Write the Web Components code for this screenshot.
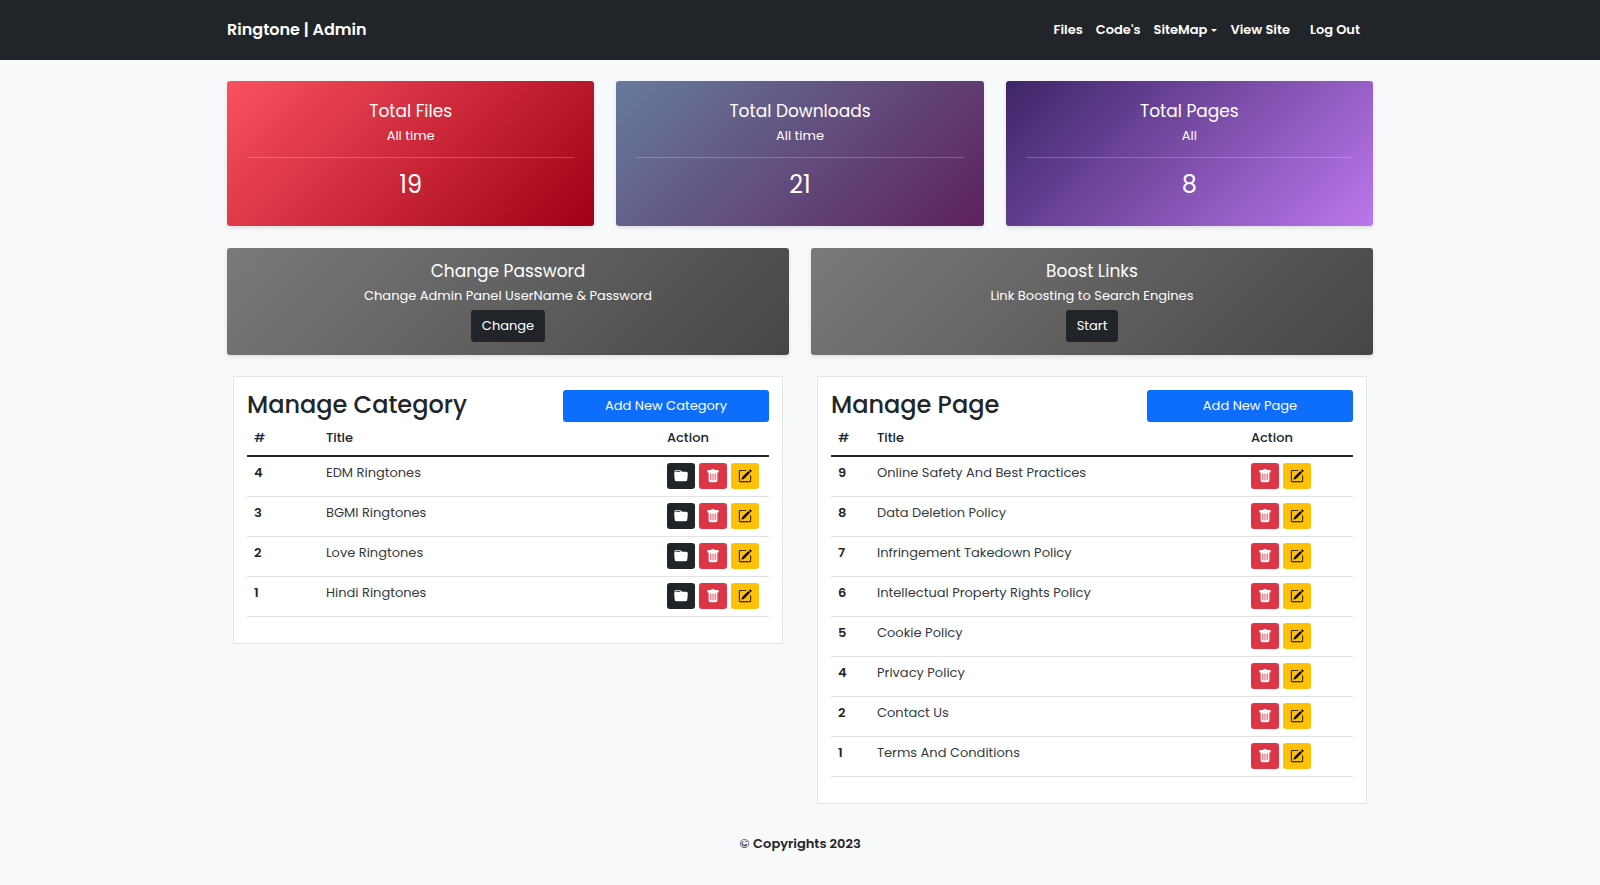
<!DOCTYPE html>
<html lang="en">
<head>
<meta charset="utf-8">
<meta name="viewport" content="width=device-width, initial-scale=1">
<title>Ringtone | Admin</title>
<style>
  body { margin: 0; background: #f8f9fb; color: #212529; font: 400 13px/20px Poppins, Inter, "Open Sans", sans-serif; }
  main { max-width: 1146px; margin: 21px auto 0; padding: 0 12px; }
  .row { display: grid; gap: 22px; margin-bottom: 21px; align-items: start; }
  .row.stats { grid-template-columns: repeat(3, 1fr); margin-bottom: 22px; }
  .row.halves { grid-template-columns: repeat(2, 1fr); }
  @media (max-width: 800px) { .row.stats, .row.halves { grid-template-columns: 1fr; } }
</style>
</head>
<body>
<admin-navbar></admin-navbar>
<main>
  <section class="row stats">
    <stat-card style="--from:#f9515f;--to:#9f0016">Total Files<span slot="sub">All time</span><span slot="value">19</span></stat-card>
    <stat-card style="--from:#667b9c;--to:#5e2160">Total Downloads<span slot="sub">All time</span><span slot="value">21</span></stat-card>
    <stat-card style="--from:#3d2567;--to:#bc77ed">Total Pages<span slot="sub">All</span><span slot="value">8</span></stat-card>
  </section>
  <section class="row halves">
    <action-card>Change Password<span slot="sub">Change Admin Panel UserName &amp; Password</span><span slot="action">Change</span></action-card>
    <action-card>Boost Links<span slot="sub">Link Boosting to Search Engines</span><span slot="action">Start</span></action-card>
  </section>
  <section class="row halves">
    <manage-panel kind="category"></manage-panel>
    <manage-panel kind="page"></manage-panel>
  </section>
</main>
<page-footer>© <strong>Copyrights 2023</strong></page-footer>

<script>
const define = (name, html, setup) => customElements.define(name, class extends HTMLElement {
  constructor() {
    super();
    const t = document.createElement('template');
    t.innerHTML = html;
    this.attachShadow({ mode: 'open' }).append(t.content.cloneNode(true));
  }
  connectedCallback() { if (setup) setup(this); }
});

define('admin-navbar', `
<style>
  :host { display: block; background: #212529; color: #fff; }
  header { max-width: 1146px; min-height: 60px; margin: 0 auto; padding: 0 12px; display: flex; align-items: center; justify-content: space-between; flex-wrap: wrap; }
  a, button { color: inherit; text-decoration: none; font: inherit; }
  .brand { font-size: 16px; font-weight: 600; }
  nav { display: flex; align-items: center; gap: 13px; margin-right: 13px; }
  nav a, nav button { font-weight: 600; }
  button { display: flex; align-items: center; gap: 4px; border: 0; padding: 0; background: none; cursor: pointer; }
  button::after { content: ""; border: 3px solid transparent; border-top-color: currentColor; border-bottom: 0; }
  .out { margin-left: 7px; }
</style>
<header>
  <a class="brand" href="#">Ringtone | Admin</a>
  <nav><a href="#files">Files</a><a href="#codes">Code's</a><button type="button" aria-haspopup="true">SiteMap</button><a href="#site">View Site</a><a class="out" href="#logout">Log Out</a></nav>
</header>`);

const cardStyle = `
  :host { display: block; box-sizing: border-box; border-radius: 3px; color: #fff; text-align: center; box-shadow: 0 2px 4px rgba(0,0,0,.1); }
  h5, p { margin: 0; }
  h5 { font-size: 17px; font-weight: 400; line-height: 20px; margin-bottom: 5px; }`;

define('stat-card', `
<style>${cardStyle}
  :host { padding: 20px 20px 25px; background: linear-gradient(135deg, var(--from), var(--to)); }
  hr { margin: 11px 0; border: 0; height: 1px; background: rgba(255,255,255,.23); }
  .value { font-size: 24px; line-height: 32px; }
</style>
<h5><slot></slot></h5><p><slot name="sub"></slot></p><hr><p class="value"><slot name="value"></slot></p>`);

define('action-card', `
<style>${cardStyle}
  :host { padding: 13px; background: linear-gradient(135deg, #7a7a7a, #464646); }
  button { display: block; margin: 4px auto 0; height: 32px; padding: 0 11px; border: 0; border-radius: 3px; background: #212529; color: #fff; font: inherit; cursor: pointer; }
</style>
<h5><slot></slot></h5><p><slot name="sub"></slot></p><button type="button"><slot name="action"></slot></button>`);

const icons = {
  open: ['#212529', '#fff', '<path d="M9.828 3h3.982a2 2 0 0 1 1.992 2.181l-.637 7A2 2 0 0 1 13.174 14H2.825a2 2 0 0 1-1.991-1.819l-.637-7a1.99 1.99 0 0 1 .342-1.31L.5 3a2 2 0 0 1 2-2h3.672a2 2 0 0 1 1.414.586l.828.828A2 2 0 0 0 9.828 3zm-8.322.12C1.72 3.042 1.95 3 2.19 3h5.396l-.707-.707A1 1 0 0 0 6.172 2H2.5a1 1 0 0 0-1 .981l.006.139z"/>'],
  delete: ['#dc3545', '#fff', '<path d="M2.5 1a1 1 0 0 0-1 1v1a1 1 0 0 0 1 1H3v9a2 2 0 0 0 2 2h6a2 2 0 0 0 2-2V4h.5a1 1 0 0 0 1-1V2a1 1 0 0 0-1-1H10a1 1 0 0 0-1-1H7a1 1 0 0 0-1 1H2.5zm3 4a.5.5 0 0 1 .5.5v7a.5.5 0 0 1-1 0v-7a.5.5 0 0 1 .5-.5zM8 5a.5.5 0 0 1 .5.5v7a.5.5 0 0 1-1 0v-7A.5.5 0 0 1 8 5zm3 .5v7a.5.5 0 0 1-1 0v-7a.5.5 0 0 1 1 0z"/>'],
  edit: ['#ffc107', '#000', '<path d="M15.502 1.94a.5.5 0 0 1 0 .706L14.459 3.69l-2-2L13.502.646a.5.5 0 0 1 .707 0l1.293 1.293zm-1.75 2.456-2-2L4.939 9.21a.5.5 0 0 0-.121.196l-.805 2.414a.25.25 0 0 0 .316.316l2.414-.805a.5.5 0 0 0 .196-.12l6.813-6.814z"/><path fill-rule="evenodd" d="M1 13.5A1.5 1.5 0 0 0 2.5 15h11a1.5 1.5 0 0 0 1.5-1.5v-6a.5.5 0 0 0-1 0v6a.5.5 0 0 1-.5.5h-11a.5.5 0 0 1-.5-.5v-11a.5.5 0 0 1 .5-.5H9a.5.5 0 0 0 0-1H2.5A1.5 1.5 0 0 0 1 2.5v11z"/>']
};

define('icon-button', `
<style>
  :host { display: block; }
  button { display: flex; align-items: center; justify-content: center; width: 28px; height: 26px; padding: 0; border: 0; border-radius: 3px; cursor: pointer; }
  svg { width: 14px; height: 14px; fill: currentColor; }
</style>
<button type="button"><svg viewBox="0 0 16 16" aria-hidden="true"></svg></button>`, el => {
  const action = el.getAttribute('action');
  const [bg, fg, path] = icons[action];
  const b = el.shadowRoot.querySelector('button');
  b.style.background = bg;
  b.style.color = fg;
  b.setAttribute('aria-label', action);
  b.firstChild.innerHTML = path;
});

const panels = {
  category: { title: 'Manage Category', add: 'Add New Category', first: 72, actions: ['open', 'delete', 'edit'],
    rows: [[4, 'EDM Ringtones'], [3, 'BGMI Ringtones'], [2, 'Love Ringtones'], [1, 'Hindi Ringtones']] },
  page: { title: 'Manage Page', add: 'Add New Page', first: 39, actions: ['delete', 'edit'],
    rows: [[9, 'Online Safety And Best Practices'], [8, 'Data Deletion Policy'], [7, 'Infringement Takedown Policy'], [6, 'Intellectual Property Rights Policy'], [5, 'Cookie Policy'], [4, 'Privacy Policy'], [2, 'Contact Us'], [1, 'Terms And Conditions']] }
};

define('manage-panel', `
<style>
  :host { display: block; margin: 0 6px; padding: 13px 13px 26px; background: #fff; border: 1px solid #e4e7ea; }
  .head { display: flex; justify-content: space-between; align-items: flex-start; }
  h2 { margin: 0; font-size: 24px; line-height: 30px; font-weight: 500; }
  .add { width: 206px; height: 32px; border: 0; border-radius: 3px; background: #0d6efd; color: #fff; font: inherit; cursor: pointer; }
  table { width: 100%; table-layout: fixed; border-collapse: separate; border-spacing: 0; }
  .action { width: 109px; }
  th, td { box-sizing: border-box; padding: 6px 7px; text-align: left; vertical-align: top; border-bottom: 1px solid #dee2e6; }
  td { color: #343a40; }
  thead th { padding: 6px 7px 7px; border-bottom: 2px solid #212529; font-weight: 500; }
  tbody th { font-weight: 600; }
  .buttons { display: flex; gap: 4px; margin-bottom: 1px; }
</style>
<div class="head"><h2></h2><button class="add" type="button"></button></div>
<table>
  <colgroup><col class="num"><col><col class="action"></colgroup>
  <thead><tr><th scope="col">#</th><th scope="col">Title</th><th scope="col">Action</th></tr></thead>
  <tbody></tbody>
</table>`, el => {
  const p = panels[el.getAttribute('kind')], $ = s => el.shadowRoot.querySelector(s);
  $('h2').textContent = p.title;
  $('.add').textContent = p.add;
  $('.num').style.width = p.first + 'px';
  const buttons = p.actions.map(a => `<icon-button action="${a}"></icon-button>`).join('');
  $('tbody').innerHTML = p.rows.map(([n, t]) => `<tr><th scope="row">${n}</th><td>${t}</td><td><div class="buttons">${buttons}</div></td></tr>`).join('');
});

define('page-footer', `
<style>
  :host { display: block; padding: 9px 0 31px; text-align: center; }
  ::slotted(strong) { font-weight: 600; }
</style>
<footer><slot></slot></footer>`);
</script>
</body>
</html>
